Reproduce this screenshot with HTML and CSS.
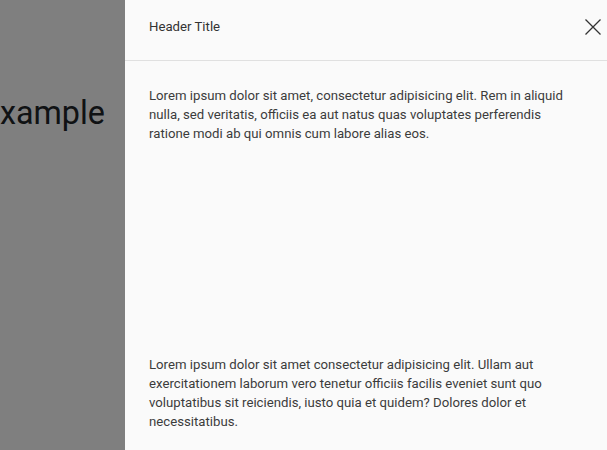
FILE: index.html
```html
<!DOCTYPE html>
<html lang="en">
<head>
<meta charset="utf-8">
<title>Drawer example</title>
<link rel="stylesheet" href="styles.css">
</head>
<body>
<main class="page">
  <div class="page-left">
    <h1 class="page-title">Drawer example</h1>
  </div>
</main>
<div class="mask"></div>
<aside class="drawer">
  <header class="drawer-header">
    <span class="drawer-title">Header Title</span>
    <button class="drawer-close" aria-label="Close">
      <svg viewBox="0 0 16 16" width="16" height="16"><path d="M0.5 0.5 L15.5 15.5 M15.5 0.5 L0.5 15.5" stroke="#333" stroke-width="1.3" fill="none"/></svg>
    </button>
  </header>
  <div class="drawer-body">
    <p class="drawer-text">Lorem ipsum dolor sit amet, consectetur adipisicing elit. Rem in aliquid nulla, sed veritatis, officiis ea aut natus quas voluptates perferendis ratione modi ab qui omnis cum labore alias eos.</p>
    <div class="spacer"></div>
    <p class="drawer-text">Lorem ipsum dolor sit amet consectetur adipisicing elit. Ullam aut exercitationem laborum vero tenetur officiis facilis eveniet sunt quo voluptatibus sit reiciendis, iusto quia et quidem? Dolores dolor et necessitatibus.</p>
  </div>
</aside>
</body>
</html>
```
FILE: styles.css
```css
html, body {
  margin: 0;
  height: 100%;
  overflow: hidden;
  background: #fff;
  font-family: Roboto, "Liberation Sans", Arial, sans-serif;
}
.page {
  display: flex;
  height: 100%;
}
.page-left {
  width: 125px;
  flex: none;
  display: flex;
  justify-content: flex-end;
  padding-right: 20px;
  box-sizing: border-box;
  overflow: hidden;
}
.page-title {
  margin: 94px 0 0;
  font-size: 32.3px;
  font-weight: 400;
  color: #212529;
  white-space: nowrap;
  line-height: normal;
}
.mask {
  position: fixed;
  inset: 0;
  background: rgba(0, 0, 0, 0.5);
}
.drawer {
  position: fixed;
  top: 0;
  bottom: 0;
  left: 125px;
  right: 0;
  background: #fafafa;
  display: flex;
  flex-direction: column;
}
.drawer-header {
  display: flex;
  align-items: center;
  justify-content: space-between;
  padding: 17px 6px 23px 24px;
  border-bottom: 1px solid #e0e0e0;
  flex: none;
}
.drawer-title {
  font-size: 13.2px;
  line-height: 20px;
  color: #333;
}
.drawer-close {
  border: 0;
  background: none;
  padding: 0;
  width: 16px;
  height: 16px;
  display: flex;
  cursor: pointer;
}
.drawer-body {
  flex: 1;
  overflow-y: scroll;
  padding: 25px 24px 24px;
  box-sizing: border-box;
}
.drawer-body::-webkit-scrollbar {
  width: 3px;
  background: #f1f1f1;
}
.drawer-body::-webkit-scrollbar-track {
  background: #f1f1f1;
}
.drawer-body::-webkit-scrollbar-thumb {
  background: #c1c1c1;
  border-left: 1px solid #f1f1f1;
}
.drawer-body::-webkit-scrollbar-button:vertical:start:decrement {
  display: block;
  height: 22px;
  background: #f1f1f1;
}
.drawer-text {
  margin: 0;
  font-size: 13.2px;
  line-height: 19px;
  color: #3c3c3c;
}
.spacer {
  height: 212px;
}
```
